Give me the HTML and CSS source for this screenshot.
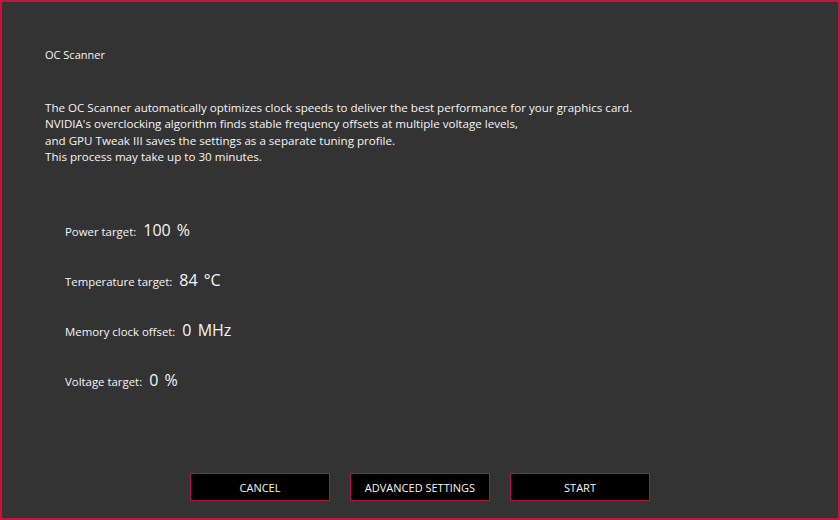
FILE: index.html
```html
<!DOCTYPE html>
<html>
<head>
<meta charset="utf-8">
<link rel="stylesheet" href="styles.css">
</head>
<body>
<div class="window">
  <div class="content">
    <div class="title">OC Scanner</div>
    <div class="desc">
      <p>The OC Scanner automatically optimizes clock speeds to deliver the best performance for your graphics card.</p>
      <p>NVIDIA's overclocking algorithm finds stable frequency offsets at multiple voltage levels,</p>
      <p>and GPU Tweak III saves the settings as a separate tuning profile.</p>
      <p>This process may take up to 30 minutes.</p>
    </div>
    <div class="settings">
      <div class="row"><span class="label">Power target:</span><span class="value">100 %</span></div>
      <div class="row"><span class="label">Temperature target:</span><span class="value">84 °C</span></div>
      <div class="row"><span class="label">Memory clock offset:</span><span class="value">0 MHz</span></div>
      <div class="row"><span class="label">Voltage target:</span><span class="value">0 %</span></div>
    </div>
  </div>
  <div class="buttons">
    <button class="btn">CANCEL</button>
    <button class="btn">ADVANCED SETTINGS</button>
    <button class="btn">START</button>
  </div>
</div>
</body>
</html>
```
FILE: styles.css
```css
* { box-sizing: border-box; }
html, body { margin: 0; padding: 0; }
body {
  width: 840px;
  height: 520px;
  background: #333333;
  font-family: "Open Sans", "Noto Sans", sans-serif;
  color: #f5f5f5;
}
.window {
  width: 840px;
  height: 520px;
  border: 2px solid #c4143c;
  background: #333333;
  display: flex;
  flex-direction: column;
}
.content {
  flex: 1;
  padding: 45px 0 0 43px;
}
.title {
  font-size: 11px;
  line-height: 16px;
}
.desc {
  margin-top: 37px;
  font-size: 11.6px;
  line-height: 16.3px;
}
.desc p { margin: 0; }
.settings {
  margin-top: 54px;
  padding-left: 20px;
  display: flex;
  flex-direction: column;
  gap: 30px;
}
.row {
  display: flex;
  align-items: baseline;
  gap: 7px;
  height: 20px;
}
.label { font-size: 11.4px; }
.value { font-size: 16px; word-spacing: 2px; }
.buttons {
  display: flex;
  justify-content: center;
  gap: 20px;
  padding-bottom: 17px;
}
.btn {
  width: 140px;
  height: 28px;
  background: #000;
  border: 1.5px solid #b0173d;
  color: #f5f5f5;
  font-family: "Open Sans", "Noto Sans", sans-serif;
  font-size: 11px;
  padding: 0;
}
```
